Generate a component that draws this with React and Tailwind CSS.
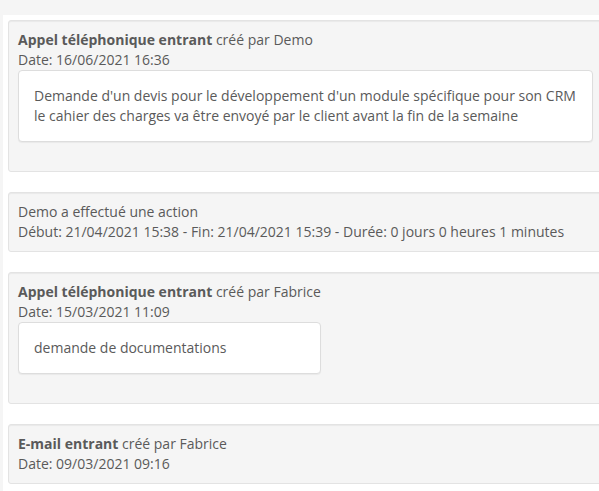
import React from 'react';

const entries = [
  {
    kind: 'Appel téléphonique entrant',
    author: 'Demo',
    date: '16/06/2021 16:36',
    note: ["Demande d'un devis pour le développement d'un module spécifique pour son CRM", 'le cahier des charges va être envoyé par le client avant la fin de la semaine'],
  },
  {
    action: true,
    lines: ['Demo a effectué une action', 'Début: 21/04/2021 15:38 - Fin: 21/04/2021 15:39 - Durée: 0 jours 0 heures 1 minutes'],
  },
  {
    kind: 'Appel téléphonique entrant',
    author: 'Fabrice',
    date: '15/03/2021 11:09',
    note: ['demande de documentations'],
  },
  {
    kind: 'E-mail entrant',
    author: 'Fabrice',
    date: '09/03/2021 09:16',
  },
];

function Entry({ item }) {
  return (
    <div className="mb-5 rounded-[3px] border border-[#e3e3e3] bg-[#f5f5f5] p-[9px] shadow-[inset_0_1px_1px_rgba(0,0,0,0.05)]">
      {item.action ? (
        item.lines.map((l) => <div key={l}>{l}</div>)
      ) : (
        <>
          <div>
            <span className="font-bold">{item.kind}</span> créé par {item.author}
          </div>
          <div>Date: {item.date}</div>
          {item.note && (
            <div className="mb-5 inline-block min-w-[303px] rounded-[4px] border border-[#dddddd] bg-white py-[15px] pl-[15px] pr-[16px] shadow-[0_1px_1px_rgba(0,0,0,0.05)]">
              {item.note.map((l) => (
                <div key={l}>{l}</div>
              ))}
            </div>
          )}
        </>
      )}
    </div>
  );
}

export default function App() {
  return (
    <div className="h-screen overflow-hidden bg-[#f5f5f5] pl-[3px] pt-[15px] font-['Open_Sans',sans-serif] text-[14px] leading-[20px] text-[#5a5a5a]">
      <div className="h-full w-[640px] bg-white pl-[5px] pt-[5px]">
        {entries.map((item, i) => (
          <Entry key={i} item={item} />
        ))}
      </div>
    </div>
  );
}
